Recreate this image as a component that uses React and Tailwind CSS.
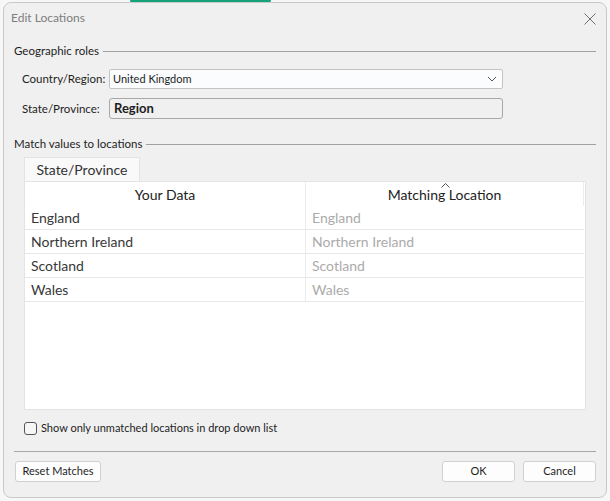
import React from "react";

const rows = ["England", "Northern Ireland", "Scotland", "Wales"];

export default function App() {
  return (
    <div className="relative w-[610px] h-[501px] bg-[#f7f7f7] overflow-hidden" style={{ fontFamily: 'Lato, "Noto Sans", sans-serif' }}>
      <div className="absolute left-[130px] top-0 w-[141px] h-[3px] rounded-b-[3px] bg-[#16a37a]" />
      <div className="absolute top-[2px] left-[3px] w-[604px] h-[496px] rounded-[8px] border border-[#c9c9c9] bg-[#f0f0f0] flex flex-col">
        {/* title bar */}
        <div className="h-[30px] flex items-center justify-between pl-[7px] pr-[8px]">
          <span className="text-[12px] text-[#7d7d7d]">Edit Locations</span>
          <svg width="14" height="14" viewBox="0 0 14 14" className="mr-[1px] mt-[1px]">
            <path d="M1.5 1.5 L12.5 12.5 M12.5 1.5 L1.5 12.5" stroke="#707070" strokeWidth="1" />
          </svg>
        </div>
        <div className="flex flex-col px-[10px] text-[11px] text-[#1e1e1e]">
          {/* Geographic roles */}
          <div className="flex items-center gap-[4px] mt-[10px] h-[16px]">
            <span className="text-[11.5px]">Geographic roles</span>
            <div className="flex-1 h-px bg-[#a0a0a0]" />
          </div>
          <div className="flex items-center mt-[10px] ml-[8px]">
            <span className="w-[87px] text-[11.5px]">Country/Region:</span>
            <div className="w-[394px] h-[20px] bg-[#fafcfe] border border-[#c4c4c4] rounded-[2px] flex items-center justify-between px-[3px]">
              <span className="text-[11px]">United Kingdom</span>
              <svg width="10" height="6" viewBox="0 0 10 6" className="mr-[2px]">
                <path d="M1 1 L5 5 L9 1" fill="none" stroke="#555" strokeWidth="1" />
              </svg>
            </div>
          </div>
          <div className="flex items-center mt-[9px] ml-[8px]">
            <span className="w-[87px] text-[11.5px]">State/Province:</span>
            <div className="w-[394px] h-[21px] bg-[#f0f0f0] border border-[#a8a8a8] rounded-[3px] flex items-center px-[4px]">
              <span className="text-[13px] font-bold">Region</span>
            </div>
          </div>
          {/* Match values */}
          <div className="flex items-center gap-[4px] mt-[17px] h-[16px]">
            <span className="text-[11.5px]">Match values to locations</span>
            <div className="flex-1 h-px bg-[#a0a0a0]" />
          </div>
          <div className="ml-[10px] mt-[5px] w-[562px] flex flex-col">
            <div className="w-[116px] h-[24px] bg-[#f9f9f9] border border-b-0 border-[#e4e4e4] flex items-center justify-center text-[14px] text-[#333]">
              State/Province
            </div>
            <div className="h-[229px] bg-white border border-[#e4e4e4] flex flex-col">
              <div className="flex h-[24px] text-[14px] text-[#222]">
                <div className="w-[281px] border-r border-[#ececec] flex items-center justify-center">Your Data</div>
                <div className="w-[278px] border-r border-[#ececec] relative flex items-center justify-center">
                  Matching Location
                  <svg width="9" height="5" viewBox="0 0 9 5" className="absolute left-[135px] top-[1px]">
                    <path d="M0.5 4.5 L4.5 0.5 L8.5 4.5" fill="none" stroke="#555" strokeWidth="1" />
                  </svg>
                </div>
              </div>
              {rows.map((r) => (
                <div key={r} className="flex h-[24px] border-b border-[#e8e8e8] w-[559px] text-[14px]">
                  <div className="w-[281px] border-r border-[#ececec] flex items-center pl-[6px] text-[#383838]">{r}</div>
                  <div className="flex-1 flex items-center pl-[6px] text-[#ababab]">{r}</div>
                </div>
              ))}
            </div>
          </div>
          <div className="flex items-center gap-[4px] mt-[10px] ml-[10px]">
            <div className="w-[13px] h-[13px] border border-[#555] rounded-[3px] bg-[#f6f6f6]" />
            <span>Show only unmatched locations in drop down list</span>
          </div>
          <div className="h-px bg-[#a8a8a8] mt-[14px]" />
          <div className="flex items-center justify-between mt-[9px]">
            <div className="w-[86px] h-[21px] ml-px bg-[#fdfdfd] border border-[#d0d0d0] rounded-[3px] flex items-center justify-center">Reset Matches</div>
            <div className="flex gap-[8px]">
              <div className="w-[73px] h-[21px] bg-[#fdfdfd] border border-[#d0d0d0] rounded-[3px] flex items-center justify-center">OK</div>
              <div className="w-[73px] h-[21px] bg-[#fdfdfd] border border-[#d0d0d0] rounded-[3px] flex items-center justify-center">Cancel</div>
            </div>
          </div>
        </div>
      </div>
    </div>
  );
}
